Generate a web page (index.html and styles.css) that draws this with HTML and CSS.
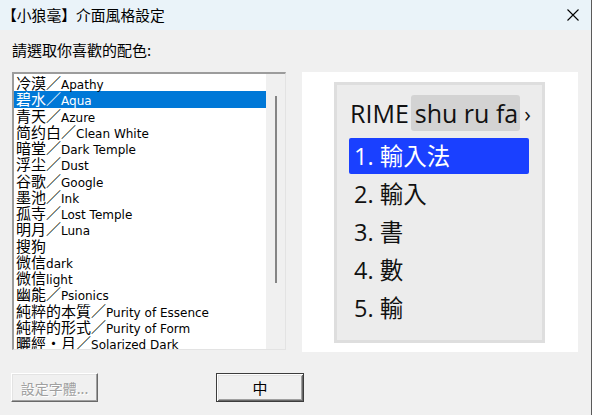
FILE: index.html
```html
<!DOCTYPE html>
<html lang="zh-Hant">
<head>
<meta charset="utf-8">
<title>【小狼毫】介面風格設定</title>
<link rel="stylesheet" href="styles.css">
</head>
<body>
<div class="window">
  <div class="titlebar">
    <span class="title">【小狼毫】介面風格設定</span>
    <svg class="close" width="12" height="12" viewBox="0 0 12 12"><path d="M0.5 0.5 L11.5 11.5 M11.5 0.5 L0.5 11.5" stroke="#000" stroke-width="1.1" fill="none"/></svg>
  </div>
  <div class="client">
    <div class="label">請選取你喜歡的配色:</div>
    <div class="main">
      <div class="listbox">
        <ul class="items">
          <li><span class="cj">冷漠／</span>Apathy</li>
          <li class="selected"><span class="cj">碧水／</span>Aqua</li>
          <li><span class="cj">青天／</span>Azure</li>
          <li><span class="cj">简约白／</span>Clean White</li>
          <li><span class="cj">暗堂／</span>Dark Temple</li>
          <li><span class="cj">浮尘／</span>Dust</li>
          <li><span class="cj">谷歌／</span>Google</li>
          <li><span class="cj">墨池／</span>Ink</li>
          <li><span class="cj">孤寺／</span>Lost Temple</li>
          <li><span class="cj">明月／</span>Luna</li>
          <li><span class="cj">搜狗</span></li>
          <li><span class="cj">微信</span>dark</li>
          <li><span class="cj">微信</span>light</li>
          <li><span class="cj">幽能／</span>Psionics</li>
          <li><span class="cj">純粹的本質／</span>Purity of Essence</li>
          <li><span class="cj">純粹的形式／</span>Purity of Form</li>
          <li><span class="cj">曬經・月／</span>Solarized Dark</li>
        </ul>
        <div class="scrollbar"><div class="thumb"></div></div>
      </div>
      <div class="preview">
        <div class="cand-panel">
          <div class="preedit">
            <span class="brand">RIME</span><span class="input">shu ru fa</span><span class="caret">›</span>
          </div>
          <ul class="cands">
            <li class="cand sel">1. 輸入法</li>
            <li class="cand">2. 輸入</li>
            <li class="cand">3. 書</li>
            <li class="cand">4. 數</li>
            <li class="cand">5. 輸</li>
          </ul>
        </div>
      </div>
    </div>
    <div class="buttons">
      <button class="btn btn-font" disabled>設定字體...</button>
      <button class="btn btn-default">中</button>
    </div>
  </div>
</div>
</body>
</html>
```
FILE: styles.css
```css
html, body {
  margin: 0;
  padding: 0;
}
body {
  width: 592px;
  height: 415px;
  overflow: hidden;
  background: #f0f0f0;
  font-family: "Noto Sans CJK TC", "DejaVu Sans", sans-serif;
}
.window {
  width: 591px;
  height: 415px;
  border-right: 1px solid #5a5a5a;
  background: #f0f0f0;
  display: flex;
  flex-direction: column;
}
.titlebar {
  height: 30px;
  flex: none;
  background: #eaf3f9;
  display: flex;
  align-items: center;
  justify-content: space-between;
  padding-left: 2px;
  padding-right: 12px;
  box-sizing: border-box;
}
.title {
  font-size: 14.8px;
  line-height: 16px;
  color: #000;
}
.close {
  display: block;
  margin-top: -1px;
}
.client {
  display: flex;
  flex-direction: column;
}
.label {
  margin: 12px 0 0 12px;
  font-size: 15px;
  line-height: 16px;
  height: 16px;
  color: #000;
}
.main {
  margin-top: 14px;
  display: flex;
  align-items: flex-start;
  gap: 16px;
  padding-left: 12px;
}
.listbox {
  width: 274px;
  height: 278px;
  box-sizing: border-box;
  border-top: 2px solid #9c9c9c;
  border-left: 2px solid #9c9c9c;
  border-right: 1px solid #e3e3e3;
  border-bottom: 1px solid #e3e3e3;
  background: #fff;
  display: flex;
  overflow: hidden;
}
.items {
  list-style: none;
  margin: 0;
  padding: 1px 0 0 0;
  flex: 1;
  overflow: hidden;
}
.items li {
  height: 16.25px;
  line-height: 16.25px;
  padding-left: 2px;
  font-family: "DejaVu Sans", sans-serif;
  font-size: 12px;
  color: #000;
  white-space: nowrap;
}
.items li .cj {
  font-family: "Noto Sans CJK TC", sans-serif;
  font-size: 15px;
}
.items li.selected {
  background: #0078d7;
  color: #fff;
}
.scrollbar {
  width: 19px;
  flex: none;
  background: #f0f0f0;
  display: flex;
  justify-content: center;
  padding-top: 22px;
  box-sizing: border-box;
}
.thumb {
  width: 2px;
  height: 187px;
  background: #858585;
}
.preview {
  width: 276px;
  height: 280px;
  background: #fff;
  padding: 10px 0 0 32px;
  box-sizing: border-box;
}
.cand-panel {
  width: 211px;
  height: 261px;
  box-sizing: border-box;
  border: 3px solid #dedede;
  background: #ececec;
  padding: 10px 0 0 12px;
}
.preedit {
  height: 36px;
  display: flex;
  align-items: center;
  font-family: "Open Sans", "Noto Sans CJK TC", sans-serif;
  font-size: 25px;
  color: #111;
  padding-left: 1px;
}
.brand {
  line-height: 36px;
}
.input {
  margin-left: 2px;
  background: #d3d3d3;
  border-radius: 3px;
  line-height: 36px;
  padding: 0 2px 0 4px;
}
.caret {
  margin-left: 4px;
  font-size: 22px;
  line-height: 36px;
}
.cands {
  list-style: none;
  margin: 7px 0 0 0;
  padding: 0;
}
.cand {
  width: 180px;
  height: 36px;
  line-height: 36px;
  margin-bottom: 2px;
  padding-left: 5px;
  box-sizing: border-box;
  font-family: "Open Sans", "Noto Sans CJK TC", sans-serif;
  font-size: 23.5px;
  color: #111;
  border-radius: 2px;
}
.cand.sel {
  background: #1a40ff;
  color: #fff;
}
.buttons {
  margin-top: 21px;
  display: flex;
  padding-left: 11px;
}
.btn {
  height: 29px;
  box-sizing: border-box;
  background: #f0f0f0;
  font-family: "Noto Sans CJK TC", sans-serif;
  font-size: 14px;
  padding: 0;
  border-top: 1px solid #ffffff;
  border-left: 1px solid #ffffff;
  border-right: 1px solid #696969;
  border-bottom: 1px solid #696969;
  box-shadow: inset -1px -1px 0 #a0a0a0, inset 1px 1px 0 #e3e3e3;
  color: #000;
}
.btn-font {
  width: 87px;
  color: #a0a0a0;
  text-shadow: 1px 1px 0 #fff;
}
.btn-default {
  width: 88px;
  margin-left: 118px;
  border: 1px solid #3c3c3c;
  box-shadow: inset 1px 1px 0 #fff, inset -1px -1px 0 #696969, inset 2px 2px 0 #e3e3e3, inset -2px -2px 0 #a0a0a0;
  font-size: 15px;
}
```
